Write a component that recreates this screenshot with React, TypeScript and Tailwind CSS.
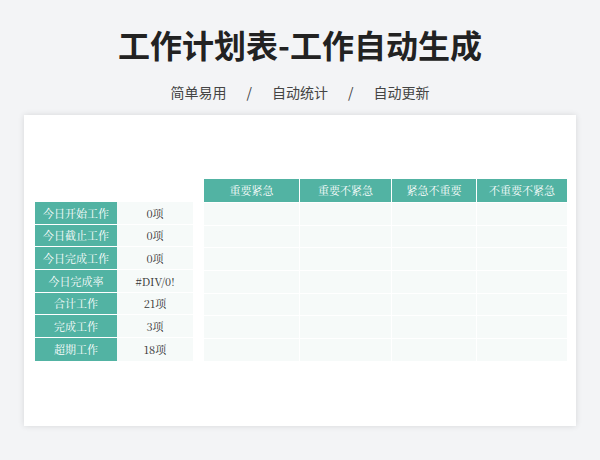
export default function App() {
  const left = [
    ["今日开始工作", "0项"],
    ["今日截止工作", "0项"],
    ["今日完成工作", "0项"],
    ["今日完成率", "#DIV/0!"],
    ["合计工作", "21项"],
    ["完成工作", "3项"],
    ["超期工作", "18项"],
  ];
  const heads = [
    ["重要紧急", "w-[95px]"],
    ["重要不紧急", "w-[91px]"],
    ["紧急不重要", "w-[84px]"],
    ["不重要不紧急", "w-[90px]"],
  ];
  const serif = { fontFamily: '"Noto Serif CJK SC", "Liberation Serif", "Noto Sans CJK SC", serif' };
  return (
    <div className="w-[600px] h-[460px] bg-[#f3f4f6] flex flex-col items-center" style={{ fontFamily: '"Noto Sans CJK SC", sans-serif' }}>
      <div className="mt-[22px] text-[32px] leading-[44px] font-bold text-[#222]">工作计划表-工作自动生成</div>
      <div className="mt-[16px] text-[14px] leading-[20px] text-[#444] flex gap-[20px]">
        <span>简单易用</span><span>/</span><span>自动统计</span><span>/</span><span>自动更新</span>
      </div>
      <div className="mt-[13px] w-[552px] h-[311px] bg-white shadow-[0_0_6px_rgba(0,0,0,0.12)] flex items-start pl-[11px] pt-[64px] gap-[11px]">
        <div className="flex flex-col mt-[23px]" style={serif}>
          {left.map(([a, b], i) => (
            <div key={i} className="flex h-[22.7px] border-b border-white last:border-b-0">
              <div className="w-[82px] bg-[#52b3a3] text-white text-[11px] flex items-center justify-center">{a}</div>
              <div className="w-[76px] bg-[#f6faf9] text-[#333] text-[11px] flex items-center justify-center">{b}</div>
            </div>
          ))}
        </div>
        <div className="flex flex-col" style={serif}>
          <div className="flex h-[23px] gap-px">
            {heads.map(([h, w], i) => (
              <div key={i} className={`${w} bg-[#52b3a3] text-white text-[11px] flex items-center justify-center`}>{h}</div>
            ))}
          </div>
          {left.map((_, r) => (
            <div key={r} className="flex h-[22.7px] gap-px border-t border-white">
              {heads.map(([h, w], i) => (
                <div key={i} className={`${w} bg-[#f6faf9]`} />
              ))}
            </div>
          ))}
        </div>
      </div>
    </div>
  );
}
